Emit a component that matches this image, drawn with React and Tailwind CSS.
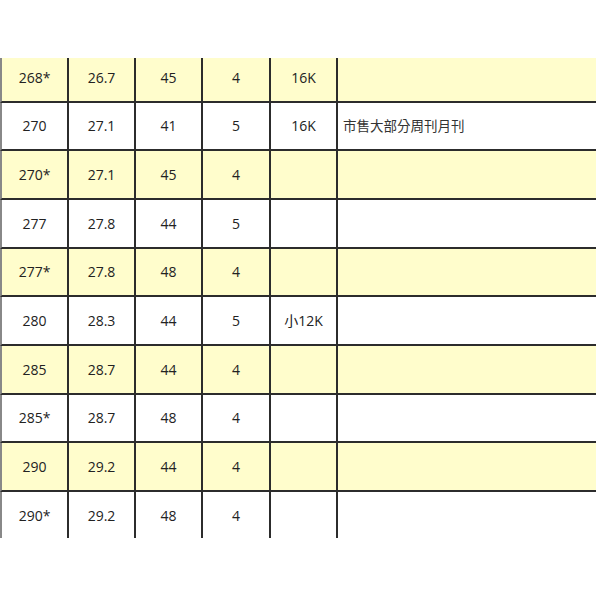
import React from "react";

const rows = [
  ["268*", "26.7", "45", "4", "16K", "", true],
  ["270", "27.1", "41", "5", "16K", "市售大部分周刊月刊", false],
  ["270*", "27.1", "45", "4", "", "", true],
  ["277", "27.8", "44", "5", "", "", false],
  ["277*", "27.8", "48", "4", "", "", true],
  ["280", "28.3", "44", "5", "小12K", "", false],
  ["285", "28.7", "44", "4", "", "", true],
  ["285*", "28.7", "48", "4", "", "", false],
  ["290", "29.2", "44", "4", "", "", true],
  ["290*", "29.2", "48", "4", "", "", false],
];

export default function App() {
  return (
    <div
      className="w-[596px] h-[596px] bg-white overflow-hidden"
      style={{ fontFamily: '"Open Sans", "Noto Sans CJK TC", sans-serif' }}
    >
      <div className="mt-[58px] h-[480px] overflow-hidden">
        <div className="-mt-[4px]">
          {rows.map((r, i) => (
            <div
              key={i}
              className={`grid grid-cols-[69px_67px_67px_68px_67px_1fr] h-[48.67px] text-[14px] text-[#222] ${
                r[6] ? "bg-[#fffdcc]" : "bg-white"
              }`}
            >
              {r.slice(0, 5).map((c, j) => (
                <div
                  key={j}
                  className={`flex items-center justify-center border-r-2 border-b-2 border-[#2c2c2c] ${
                    j === 0 ? "border-l-2 border-l-[#888]" : ""
                  }`}
                >
                  {c}
                </div>
              ))}
              <div className="flex items-center pl-[5px] border-b-2 border-[#2c2c2c] text-[13.5px] text-[#333]">
                {r[5]}
              </div>
            </div>
          ))}
        </div>
      </div>
    </div>
  );
}
